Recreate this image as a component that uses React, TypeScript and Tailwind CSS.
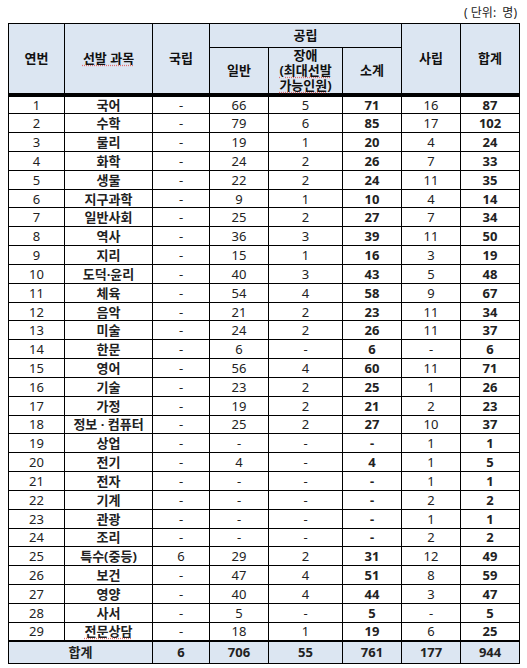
import React from "react";

type Row = [string, string, string, string, string, string, string, string];

const rows: Row[] = [
  ["1", "국어", "-", "66", "5", "71", "16", "87"],
  ["2", "수학", "-", "79", "6", "85", "17", "102"],
  ["3", "물리", "-", "19", "1", "20", "4", "24"],
  ["4", "화학", "-", "24", "2", "26", "7", "33"],
  ["5", "생물", "-", "22", "2", "24", "11", "35"],
  ["6", "지구과학", "-", "9", "1", "10", "4", "14"],
  ["7", "일반사회", "-", "25", "2", "27", "7", "34"],
  ["8", "역사", "-", "36", "3", "39", "11", "50"],
  ["9", "지리", "-", "15", "1", "16", "3", "19"],
  ["10", "도덕·윤리", "-", "40", "3", "43", "5", "48"],
  ["11", "체육", "-", "54", "4", "58", "9", "67"],
  ["12", "음악", "-", "21", "2", "23", "11", "34"],
  ["13", "미술", "-", "24", "2", "26", "11", "37"],
  ["14", "한문", "-", "6", "-", "6", "-", "6"],
  ["15", "영어", "-", "56", "4", "60", "11", "71"],
  ["16", "기술", "-", "23", "2", "25", "1", "26"],
  ["17", "가정", "-", "19", "2", "21", "2", "23"],
  ["18", "정보 · 컴퓨터", "-", "25", "2", "27", "10", "37"],
  ["19", "상업", "-", "-", "-", "-", "1", "1"],
  ["20", "전기", "-", "4", "-", "4", "1", "5"],
  ["21", "전자", "-", "-", "-", "-", "1", "1"],
  ["22", "기계", "-", "-", "-", "-", "2", "2"],
  ["23", "관광", "-", "-", "-", "-", "1", "1"],
  ["24", "조리", "-", "-", "-", "-", "2", "2"],
  ["25", "특수(중등)", "6", "29", "2", "31", "12", "49"],
  ["26", "보건", "-", "47", "4", "51", "8", "59"],
  ["27", "영양", "-", "40", "4", "44", "3", "47"],
  ["28", "사서", "-", "5", "-", "5", "-", "5"],
  ["29", "전문상담", "-", "18", "1", "19", "6", "25"],
];

const th =
  "border border-black bg-[#dce6f2] font-bold text-[13px] text-[#111] text-center align-middle p-0 leading-[15px]";
const td =
  "border border-black text-center align-middle p-0 text-[13px] leading-[16px] text-[#222]";
const squiggle =
  "underline decoration-dotted decoration-[#e07070] underline-offset-[2px]";
const dbl = "border-b-4 border-b-double";

export default function App() {
  return (
    <div
      className="w-[527px] h-[668px] bg-white text-black"
      style={{ fontFamily: "'Noto Sans', 'Noto Sans CJK KR', sans-serif" }}
    >
      <div className="h-[23px] pt-[5px] pr-[10px] text-right text-[12px] leading-[16px] text-[#222]">
        ( 단위:&nbsp; 명)
      </div>
      <table className="ml-[8px] w-[511px] table-fixed border-collapse">
        <colgroup>
          <col className="w-[56px]" />
          <col className="w-[88px]" />
          <col className="w-[57px]" />
          <col className="w-[59px]" />
          <col className="w-[74px]" />
          <col className="w-[59px]" />
          <col className="w-[59px]" />
          <col className="w-[59px]" />
        </colgroup>
        <thead>
          <tr className="h-[24px]">
            <th rowSpan={2} className={`${th} ${dbl}`}>
              연번
            </th>
            <th rowSpan={2} className={`${th} ${dbl}`}>
              <span className={squiggle}>선발 과목</span>
            </th>
            <th rowSpan={2} className={`${th} ${dbl}`}>
              국립
            </th>
            <th colSpan={3} className={th}>
              공립
            </th>
            <th rowSpan={2} className={`${th} ${dbl}`}>
              사립
            </th>
            <th rowSpan={2} className={`${th} ${dbl}`}>
              합계
            </th>
          </tr>
          <tr className="h-[44px]">
            <th className={`${th} ${dbl}`}>일반</th>
            <th className={`${th} ${dbl}`}>
              <div className="leading-[15px]">
                장애
                <br />
                <span className={squiggle}>(최대선발</span>
                <br />
                <span className={squiggle}>가능인원)</span>
              </div>
            </th>
            <th className={`${th} ${dbl}`}>소계</th>
          </tr>
        </thead>
        <tbody>
          {rows.map((r) => (
            <tr key={r[0]} className="h-[18.83px]">
              <td className={td}>{r[0]}</td>
              <td className={`${td} font-bold text-[12.5px] text-[#111]`}>
                {r[0] === "29" ? <span className={squiggle}>{r[1]}</span> : r[1]}
              </td>
              <td className={td}>{r[2]}</td>
              <td className={td}>{r[3]}</td>
              <td className={td}>{r[4]}</td>
              <td className={`${td} font-bold text-[#111]`}>{r[5]}</td>
              <td className={td}>{r[6]}</td>
              <td className={`${td} font-bold text-[#111]`}>{r[7]}</td>
            </tr>
          ))}
          <tr className="h-[22px]">
            <td
              colSpan={2}
              className={`${td} border-t-2 bg-[#dce6f2] font-bold text-[13px] text-[#111]`}
            >
              합계
            </td>
            {["6", "706", "55", "761", "177", "944"].map((v, i) => (
              <td
                key={i}
                className={`${td} border-t-2 bg-[#dce6f2] font-bold text-[13px] text-[#111]`}
              >
                {v}
              </td>
            ))}
          </tr>
        </tbody>
      </table>
    </div>
  );
}
